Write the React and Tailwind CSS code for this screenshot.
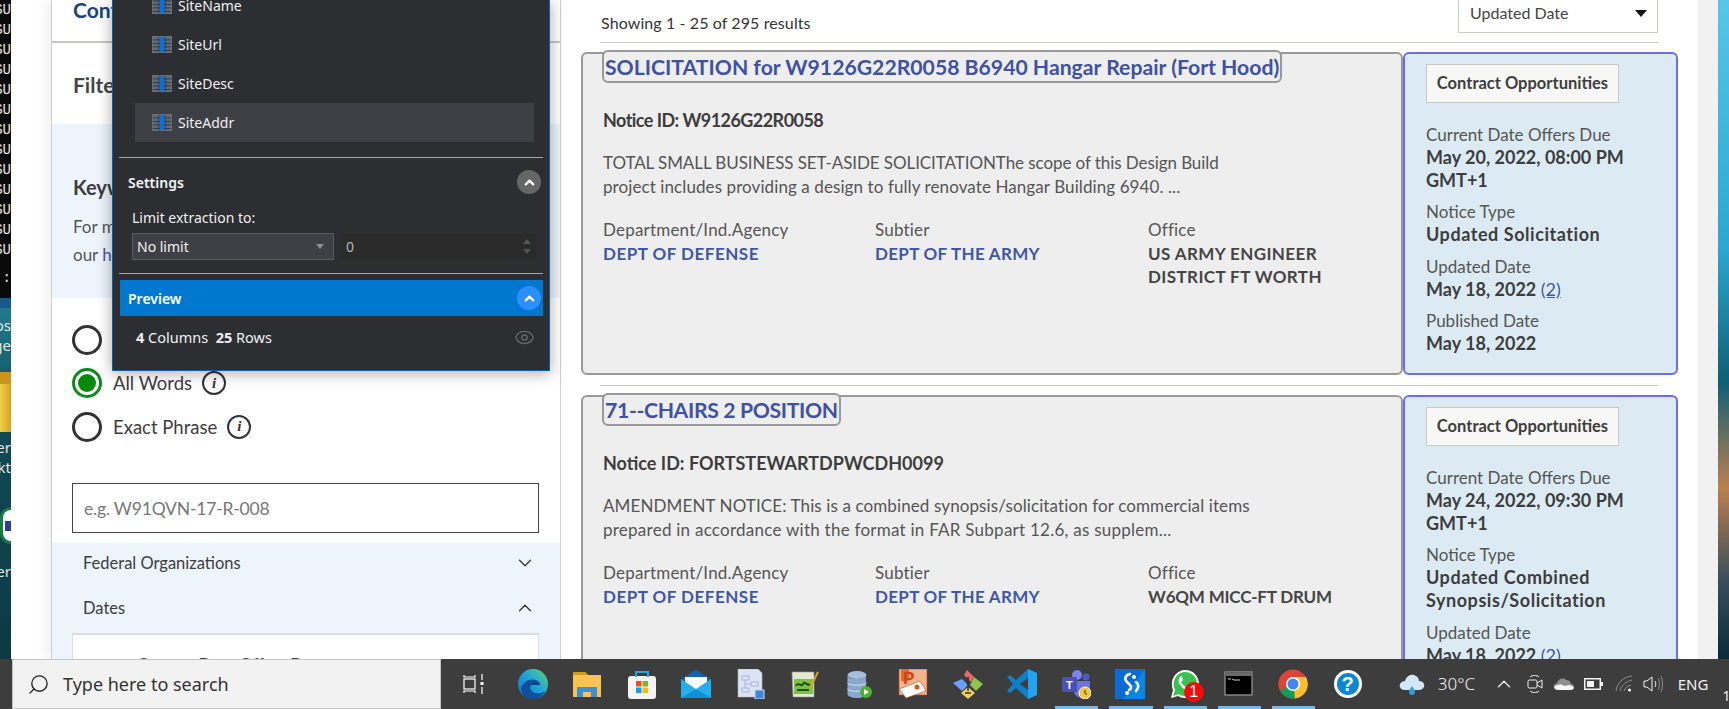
import React from "react";
import { ChevronDown, ChevronUp, Eye, Search } from "lucide-react";

const TableIcon = () => (
  <svg width="20" height="17" viewBox="0 0 20 17">
    <rect x="0" y="0" width="20" height="17" fill="#5f6a75" />
    {[3.5, 7, 10.5, 14].map((y) => (
      <rect key={y} x="0" y={y} width="20" height="0.8" fill="#2d2e32" />
    ))}
    <rect x="6.5" y="0" width="0.8" height="17" fill="#2d2e32" />
    <rect x="12.7" y="0" width="0.8" height="17" fill="#2d2e32" />
    <rect x="0.8" y="0.8" width="18.4" height="15.4" fill="none" stroke="#6d7780" strokeWidth="0.8" />
    <rect x="7.6" y="1" width="4.8" height="15" fill="#0a6fd6" />
  </svg>
);

const FieldRow = ({ name, active }) => (
  <div className={`h-[39px] ml-[22px] mr-[15px] pl-[17px] flex items-center gap-[6px] ${active ? "bg-[#3e3f44]" : ""}`}>
    <TableIcon />
    <span className="text-[14px] text-[#f0f0f0]">{name}</span>
  </div>
);

const RoundToggle = ({ color }) => (
  <span className={`w-[24px] h-[24px] rounded-full flex items-center justify-center ${color}`}>
    <ChevronUp size={15} strokeWidth={3.5} color="#fff" />
  </span>
);

const ExtractPopup = () => (
  <div className="absolute z-20 left-[112px] top-0 w-[438px] h-[371px] bg-[#2d2e32] border border-t-0 border-[#0f5ea8] overflow-hidden shadow-[0_2px_14px_rgba(0,0,0,0.35)] font-['Noto_Sans',sans-serif]">
    <div className="-mt-[14px]">
      <FieldRow name="SiteName" />
      <FieldRow name="SiteUrl" />
      <FieldRow name="SiteDesc" />
      <FieldRow name="SiteAddr" active />
    </div>
    <div className="mt-[15px] mx-[6px] h-px bg-[#a8a8a8]" />
    <div className="h-[48px] pl-[15px] pr-[8px] flex items-center justify-between">
      <span className="text-[14px] font-semibold text-[#f4f4f4]">Settings</span>
      <RoundToggle color="bg-[#666666]" />
    </div>
    <div className="h-[22px] ml-[19px] flex items-center text-[14px] text-[#f0f0f0]">Limit extraction to:</div>
    <div className="mt-[5px] ml-[19px] flex gap-[6px]">
      <div className="w-[202px] h-[27px] bg-[#3f4045] border border-[#5a5b60] flex items-center justify-between pl-[4px] pr-[9px]">
        <span className="text-[14px] text-[#f0f0f0]">No limit</span>
        <span className="w-0 h-0 border-x-[4px] border-x-transparent border-t-[5px] border-t-[#8e8e8e]" />
      </div>
      <div className="w-[196px] h-[27px] bg-[#2b2b2c] flex items-center justify-between pl-[6px] pr-[4px]">
        <span className="text-[14px] text-[#b8b8b8]">0</span>
        <span className="flex flex-col gap-[5px] mr-[1px]">
          <span className="w-0 h-0 border-x-[4px] border-x-transparent border-b-[5px] border-b-[#55565a]" />
          <span className="w-0 h-0 border-x-[4px] border-x-transparent border-t-[5px] border-t-[#55565a]" />
        </span>
      </div>
    </div>
    <div className="mt-[13px] mx-[6px] h-px bg-[#a8a8a8]" />
    <div className="mt-[6px] ml-[7px] mr-[6px] h-[36px] bg-[#0078cf] pl-[8px] pr-[2px] flex items-center justify-between">
      <span className="text-[14px] font-semibold text-white">Preview</span>
      <RoundToggle color="bg-[#2b8fff]" />
    </div>
    <div className="h-[43px] pl-[23px] pr-[14px] flex items-center justify-between text-[14.5px] text-[#f0f0f0]">
      <span>
        <b>4</b> Columns &nbsp;<b>25</b> Rows
      </span>
      <Eye size={21} strokeWidth={1.4} color="#6a6b70" />
    </div>
  </div>
);

const InfoDot = () => (
  <span className="w-[24px] h-[24px] rounded-full border-2 border-[#333333] flex items-center justify-center font-['Liberation_Serif',serif] italic font-bold text-[15px] leading-none text-[#333333]">
    i
  </span>
);

const Radio = ({ label, checked }) => (
  <div className="h-[43.5px] flex items-center">
    {checked ? (
      <span className="w-[30px] h-[30px] rounded-full border-[3px] border-[#0b8a1a] p-[3px] bg-white">
        <span className="block w-full h-full rounded-full bg-[#078a0c]" />
      </span>
    ) : (
      <span className="w-[30px] h-[30px] rounded-full border-[3px] border-[#333333] bg-white" />
    )}
    <span className="ml-[11px] pt-[2px] text-[18.5px] text-[#3d3d3d]">{label}</span>
    <span className="ml-[10px]">
      <InfoDot />
    </span>
  </div>
);

const FilterPanel = () => (
  <div className="w-[510px] h-full shrink-0 border-x border-[#cfcfca] bg-white shadow-[-6px_0_10px_rgba(0,0,0,0.05)]">
    <div className="h-[43px] border-b-2 border-[#c8c8c2] pl-[21px] pt-0 text-[21px] leading-[20px] font-bold text-[#1a4480]">
      Contract Opportunities
    </div>
    <div className="h-[81px] pl-[21px] pt-[28px] text-[21px] leading-[28px] font-bold text-[#454545]">Filters</div>
    <div className="h-[174px] bg-[#edf4fb] pl-[21px] pr-[20px] pt-[50px]">
      <div className="text-[20px] leading-[26px] font-bold text-[#3d3d3d]">Keyword Search</div>
      <p className="mt-[13px] text-[17px] leading-[28px] text-[#555555]">
        For more information on how to use
        <br />
        our <span className="text-[#3f57a6]">help guide</span>
      </p>
    </div>
    <div className="pl-[20px] pr-[21px] pt-[20px]">
      <Radio label="Any Words" />
      <Radio label="All Words" checked />
      <Radio label="Exact Phrase" />
      <div className="mt-[34.5px] h-[50px] border border-[#444444] flex items-center pl-[11px] pt-[2px] text-[17.5px] tracking-[-0.2px] text-[#777777]">
        e.g. W91QVN-17-R-008
      </div>
    </div>
    <div className="mt-[10px] h-[120px] bg-[#edf4fb] overflow-hidden">
      <div className="h-[40px] pl-[31px] pr-[24px] flex items-center justify-between text-[16.5px] text-[#3d3d3d]">
        Federal Organizations
        <ChevronDown size={22} strokeWidth={1.4} color="#333333" />
      </div>
      <div className="h-[50px] pl-[31px] pr-[24px] flex items-center justify-between text-[16.5px] text-[#3d3d3d]">
        Dates
        <ChevronUp size={22} strokeWidth={1.4} color="#333333" />
      </div>
      <div className="ml-[20px] mr-[21px] h-[40px] bg-white border-t-2 border-x border-[#d9dde2] pl-[64px] pt-[17px] text-[17px] text-[#3d3d3d]">
        Current Date Offers Due
      </div>
    </div>
  </div>
);

const Field = ({ label, children }) => (
  <>
    <div className="text-[#555555] font-normal tracking-[0.2px]">{label}</div>
    {children}
  </>
);

const OppCard = ({ title, titleTrack, notice, noticeTrack, desc, office, officeTrack, due, type, updated, published }) => (
  <div className="flex h-[323px] shrink-0 text-[17px] leading-[23.5px]">
    <div className="flex-1 bg-[#eeeeee] border-2 border-[#999999] rounded-[6px] pl-[20px] pr-[16px]">
      <div className={`-mt-[4px] -ml-[1px] h-[33px] w-fit border-2 border-[#999999] rounded-[6px] bg-[#eeeeee] px-[1px] text-[21.2px] leading-[30px] font-bold text-[#3f51a5] whitespace-nowrap ${titleTrack}`}>
        {title}
      </div>
      <div className={`mt-[25px] text-[18px] leading-[24px] font-bold text-[#3d3d3d] ${noticeTrack}`}>Notice ID: {notice}</div>
      <div className="mt-[19px] text-[17px] leading-[24px] text-[#555555] whitespace-nowrap">
        {desc.map(([line, track]) => (
          <div key={line} className={track}>
            {line}
          </div>
        ))}
      </div>
      <div className="mt-[19px] grid grid-cols-[272px_273px_1fr]">
        <div>
          <Field label="Department/Ind.Agency">
            <div className="font-bold text-[#3f57a6] tracking-[0.5px]">DEPT OF DEFENSE</div>
          </Field>
        </div>
        <div>
          <Field label="Subtier">
            <div className="font-bold text-[#3f57a6] tracking-[0.3px]">DEPT OF THE ARMY</div>
          </Field>
        </div>
        <div>
          <Field label="Office">
            <div className={`font-bold text-[#454545] whitespace-pre-line ${officeTrack}`}>{office}</div>
          </Field>
        </div>
      </div>
    </div>
    <div className="w-[275px] shrink-0 bg-[#dcebf3] border-2 border-[#6a6cf5] rounded-[6px] pl-[21px] pt-[10px] leading-[23px]">
      <div className="w-[193px] h-[39px] bg-[#f7f7f5] border border-[#c9c9c4] flex items-center justify-center text-[16.5px] font-bold text-[#3d3d3d]">
        Contract Opportunities
      </div>
      <div className="mt-[19.5px] text-[18px] text-[#3d3d3d] font-bold">
        <div>
          <div className="text-[17px] text-[#555555] font-normal">Current Date Offers Due</div>
          {due}
          <br />
          GMT+1
        </div>
        <div className="mt-[8.5px]">
          <div className="text-[17px] text-[#555555] font-normal">Notice Type</div>
          <div className="whitespace-pre-line tracking-[0.55px]">{type}</div>
        </div>
        <div className="mt-[8.5px]">
          <div className="text-[17px] text-[#555555] font-normal">Updated Date</div>
          {updated} <span className="font-normal text-[#3f57a6] underline">(2)</span>
        </div>
        <div className="mt-[8.5px]">
          <div className="text-[17px] text-[#555555] font-normal">Published Date</div>
          {published}
        </div>
      </div>
    </div>
  </div>
);

const Results = () => (
  <div className="ml-[20px] w-[1097px] shrink-0 h-full overflow-hidden flex flex-col">
    <div className="ml-[19px] mr-[20px] h-[43px] shrink-0 border-b border-[#cbcbc2] flex justify-between">
      <span className="ml-px pt-[11px] text-[16px] leading-[24px] tracking-[0.1px] text-[#333333]">Showing 1 - 25 of 295 results</span>
      <div className="w-[200px] h-[33px] border-x border-b border-[#cbcbc2] flex items-center justify-between pl-[11px] pr-[10px] pb-[6px] text-[16px] text-[#444444]">
        Updated Date
        <span className="w-0 h-0 border-x-[6px] border-x-transparent border-t-[7px] border-t-[#111111]" />
      </div>
    </div>
    <div className="mt-[9px]">
      <OppCard
        title="SOLICITATION for W9126G22R0058 B6940 Hangar Repair (Fort Hood)"
        titleTrack=""
        notice="W9126G22R0058"
        noticeTrack="tracking-[-0.55px]"
        desc={[
          ["TOTAL SMALL BUSINESS SET-ASIDE SOLICITATIONThe scope of this Design Build", "tracking-[-0.08px]"],
          ["project includes providing a design to fully renovate Hangar Building 6940. ...", "tracking-[0.09px]"],
        ]}
        office={"US ARMY ENGINEER\nDISTRICT FT WORTH"}
        officeTrack="tracking-[0.4px]"
        due="May 20, 2022, 08:00 PM"
        type="Updated Solicitation"
        updated="May 18, 2022"
        published="May 18, 2022"
      />
    </div>
    <div className="mt-[10px] ml-[19px] mr-[20px] h-px shrink-0 bg-[#cbcbc2]" />
    <div className="mt-[9px]">
      <OppCard
        title="71--CHAIRS 2 POSITION"
        titleTrack="tracking-[-0.35px]"
        notice="FORTSTEWARTDPWCDH0099"
        noticeTrack=""
        desc={[
          ["AMENDMENT NOTICE: This is a combined synopsis/solicitation for commercial items", "tracking-[0.11px]"],
          ["prepared in accordance with the format in FAR Subpart 12.6, as supplem...", "tracking-[0.25px]"],
        ]}
        office="W6QM MICC-FT DRUM"
        officeTrack="tracking-[-0.2px]"
        due="May 24, 2022, 09:30 PM"
        type={"Updated Combined\nSynopsis/Solicitation"}
        updated="May 18, 2022"
        published="May 18, 2022"
      />
    </div>
  </div>
);

const LeftDesktop = () => (
  <div className="w-[11px] h-full shrink-0 flex flex-col overflow-hidden bg-[#0c3a44] text-[#e5e5e5]">
    <div className="h-[298px] shrink-0 bg-[#0a0a0a] font-['Liberation_Mono',monospace] text-[14px]">
      {Array.from({ length: 13 }).map((_, i) => (
        <div key={i} className="h-[20px] flex justify-end leading-[20px]">
          SU
        </div>
      ))}
      <div className="h-[28px] flex justify-end items-end leading-[20px]">::</div>
    </div>
    <div className="h-[10px] shrink-0 bg-[#14598f]" />
    <div className="flex-1 flex flex-col items-end bg-[linear-gradient(180deg,#1f7a8c_0%,#0f4a55_35%,#0b3a44_100%)] text-[15px] font-['Noto_Sans',sans-serif]">
      <div className="h-[20px] leading-[20px] mt-[7px]">os</div>
      <div className="h-[20px] leading-[20px]">ge</div>
      <div className="mt-[17px] h-[60px] w-[11px] shrink-0 bg-[linear-gradient(90deg,#f0cf4a,#d9a520)] border-t-[12px] border-[#c9951c]" />
      <div className="h-[20px] leading-[20px] mt-[5px]">er</div>
      <div className="h-[20px] leading-[20px]">kt</div>
      <div className="mt-[30px] h-[37px] w-[11px] shrink-0 rounded-l-full border-[3px] border-r-0 border-[#187a45] bg-white flex items-center">
        <span className="block ml-[2px] w-[6px] h-[10px] bg-[#2d3e8c]" />
      </div>
      <div className="h-[20px] leading-[20px] mt-[17px]">er</div>
    </div>
  </div>
);

/* taskbar icons, drawn on a 30x30 box */
const Ico = ({ children }) => (
  <svg width="30" height="30" viewBox="0 0 30 30">
    {children}
  </svg>
);

const TaskIcons = [
  <Ico key="edge">
    <defs>
      <linearGradient id="edgeA" x1="0" y1="1" x2="1" y2="0">
        <stop offset="0" stopColor="#0c6fc4" />
        <stop offset="0.55" stopColor="#1fa7d8" />
        <stop offset="1" stopColor="#5fd66a" />
      </linearGradient>
    </defs>
    <circle cx="15" cy="15" r="15" fill="url(#edgeA)" />
    <path d="M3 20C5 12 12 9 18 11c3 1 4 3 4 5h-9c-2 3 0 7 4 8 4 1 7 0 10-2-3 6-8 8-13 8-6 0-10-4-11-10z" fill="#0f4f9c" />
    <path d="M13 16c2-3 7-3 9 0z" fill="#0c3f7f" />
  </Ico>,
  <Ico key="folder">
    <path d="M1 3h12l3 3h13v22H1z" fill="#f5c451" />
    <path d="M1 3h12l3 3H1z" fill="#d49a1f" />
    <path d="M5 28V18h20v10h-6v-5h-8v5z" fill="#3f8fd6" />
  </Ico>,
  <Ico key="store">
    <rect x="1" y="7" width="28" height="23" rx="3" fill="#f4f4f4" />
    <path d="M9 8V3h12v5" fill="none" stroke="#2aa5e0" strokeWidth="2" />
    <rect x="9" y="12" width="5.5" height="5.5" fill="#e8501f" />
    <rect x="15.5" y="12" width="5.5" height="5.5" fill="#7cb82a" />
    <rect x="9" y="18.5" width="5.5" height="5.5" fill="#10a2ec" />
    <rect x="15.5" y="18.5" width="5.5" height="5.5" fill="#fbb911" />
  </Ico>,
  <Ico key="mail">
    <path d="M0 10 15 1l15 9-15 10z" fill="#0f63b8" />
    <path d="M4 8h22v10l-11 6-11-6z" fill="#fff" />
    <path d="M0 10l15 10 15-10v19H0z" fill="#25aeea" />
    <path d="M0 29l15-9 15 9z" fill="#1190d8" />
  </Ico>,
  <Ico key="doc">
    <path d="M3 0h20l4 4v24H3z" fill="#dde3f3" stroke="#aeb6c8" strokeWidth="0.6" />
    <path d="M7 7h7v4H7zM16 13h7v4h-7zM7 19h7v4H7zM10 11v8M10 15h6" fill="none" stroke="#a7b4dc" strokeWidth="1" />
    <rect x="20" y="21" width="9" height="9" fill="#3c87d8" stroke="#c9d9f0" />
  </Ico>,
  <Ico key="npp">
    <path d="M2 3h22v25H3z" fill="#e6e6d6" stroke="#999988" strokeWidth="0.6" />
    <rect x="4" y="10" width="19" height="15" fill="#7fc241" />
    <path d="M6 17c2-5 5 2 7-2s4 3 7 0M7 21h12" stroke="#1f4d1a" strokeWidth="2" fill="none" />
    <path d="M20 19 28 3" stroke="#e0a11f" strokeWidth="2" />
  </Ico>,
  <Ico key="db">
    <ellipse cx="13" cy="6" rx="9.5" ry="4" fill="#a5bedb" />
    <path d="M3.5 6v19c0 2 4 4 9.500 4S22 27 22 25V6c0 2-4 4-9.500 4S3.500 8 3.500 6z" fill="#8aa8cc" />
    <path d="M3.500 14c2 3 17 3 19 0M3.500 20c2 3 17 3 19 0" stroke="#d2e0ef" fill="none" />
    <circle cx="22" cy="23" r="6" fill="#4fb02d" />
    <path d="M20 20v6l5-3z" fill="#fff" />
  </Ico>,
  <Ico key="ppt">
    <rect x="1" y="0" width="28" height="26" fill="#f2b48a" stroke="#b9451c" strokeWidth="0.6" />
    <path d="M3 0h8v12H3z" fill="#e66a25" />
    <text x="5" y="15" fontSize="17" fontWeight="700" fill="#d0421c" fontFamily="Liberation Sans, sans-serif">P</text>
    <path d="M1 20 22 12l6 10-20 7z" fill="#fff" stroke="#c9401f" strokeWidth="0.6" />
    <circle cx="19" cy="18" r="2.500" fill="#d9541f" />
  </Ico>,
  <Ico key="diamond">
    <path d="M9 10 15 16 9 22 0 14z" fill="#6a9eff" />
    <path d="M14 1 21 8 18 13 11 6z" fill="#e86a6a" />
    <path d="M21 8 30 15 23 22 17 16z" fill="#8dc44e" />
    <path d="M15 18 22 24 15 30 8 24z" fill="#f2cf5b" />
    <path d="M15 8v14M12 24h6" stroke="#333" strokeWidth="1.600" />
  </Ico>,
  <Ico key="vscode">
    <path d="M21 0 30 4v22l-9 4-12-11-6 5-3-2 6-7-6-7 3-2 6 5z" fill="#0f7fc7" />
    <path d="M21 0 30 4v22l-9 4V20l-7-5 7-5z" fill="#22a3ec" />
    <path d="M21 9l-8 6 8 6z" fill="#3d3d3d" />
  </Ico>,
  <Ico key="teams">
    <circle cx="16" cy="6" r="5" fill="#7b83eb" />
    <circle cx="25" cy="8" r="3.500" fill="#5059c9" />
    <path d="M13 12h16v10c0 5-4 7-7 7-4 0-9-2-9-7z" fill="#6c74d8" />
    <rect x="1" y="8" width="15" height="15" rx="1.500" fill="#4a51b5" />
    <text x="5" y="20" fontSize="11" fontWeight="700" fill="#fff" fontFamily="Liberation Sans, sans-serif">T</text>
    <circle cx="24" cy="24" r="6" fill="#f2c53c" stroke="#fff" />
    <path d="M24 21v3.500l2 1" fill="none" stroke="#333" />
  </Ico>,
  <Ico key="sq">
    <rect width="30" height="30" fill="#0a6ad6" />
    <path d="M30 0v30H8z" fill="#0a84e6" />
    <path d="M15 5c-5 1-6 5-3 8l3 3c2 2 1 4-1 5" fill="none" stroke="#fff" strokeWidth="2.600" strokeLinecap="round" />
    <circle cx="19" cy="8" r="2" fill="#fff" />
    <circle cx="12" cy="24" r="2" fill="#fff" />
    <path d="M21 13c3 2 3 6 0 9" fill="none" stroke="#fff" strokeWidth="2.600" strokeLinecap="round" />
  </Ico>,
  <div key="wa" className="relative w-[30px] h-[30px]">
    <Ico>
      <path d="M1 29l2-8C-1 11 6 1 15 1c8 0 14 6 14 14s-6 14-14 14c-3 0-5-1-7-2z" fill="#fff" />
      <path d="M3 27l2-6C1 12 7 3 15 3c7 0 12 5 12 12s-5 12-12 12c-3 0-5-1-6-2z" fill="#3ac14f" />
      <path d="M10 8c-2 2-2 5 1 9s7 5 9 4l2-3-4-2-2 2c-2-1-4-3-5-5l2-2-1-4z" fill="#fff" />
    </Ico>
    <span className="absolute -right-[4px] bottom-[-3px] w-[20px] h-[20px] rounded-full bg-[#f40c0c] text-white text-[16px] leading-[20px] text-center font-['Liberation_Sans',sans-serif]">
      1
    </span>
  </div>,
  <Ico key="term">
    <rect x="1" y="3" width="27" height="23" fill="#000" stroke="#8a8a8a" strokeWidth="1.400" />
    <rect x="2" y="4" width="25" height="3" fill="#6b6b6b" />
    <path d="M4 10h3M8 10l2 1h6" stroke="#cfcfcf" strokeWidth="1" fill="none" />
  </Ico>,
  <Ico key="chrome">
    <circle cx="15" cy="15" r="14.500" fill="#db4437" />
    <path d="M15 15 2.500 22A14.500 14.500 0 0 1 2.500 8z" fill="#db4437" />
    <path d="M15 15 17 29.500A14.500 14.500 0 0 1 2 21.500z" fill="#0f9d58" />
    <path d="M15 8h13a14.500 14.500 0 0 1-11 21.500z" fill="#fbc02d" />
    <circle cx="15" cy="15" r="7" fill="#fff" />
    <circle cx="15" cy="15" r="5.500" fill="#4285f4" />
  </Ico>,
  <div key="help" className="w-[28px] h-[28px] rounded-full border-[3px] border-white bg-[#0a86d6] flex items-center justify-center text-white font-bold text-[20px] font-['Liberation_Sans',sans-serif]">
    ?
  </div>,
];

const underlined = [10, 11, 12, 13, 14];

const Taskbar = () => (
  <div className="h-[50px] shrink-0 bg-[#3d3d3d] flex items-stretch font-['Noto_Sans',sans-serif] overflow-hidden">
    <div className="ml-[12px] w-[429px] shrink-0 bg-[#f2f2f2] border border-[#c4c4c4] flex items-center">
      <Search size={23} strokeWidth={1.4} color="#222222" className="ml-[14px] -scale-x-100" />
      <span className="ml-[13px] text-[18px] text-[#333333]">Type here to search</span>
    </div>
    <div className="w-[65px] shrink-0 flex items-center justify-center">
      <svg width="22" height="20" viewBox="0 0 22 20" fill="none" stroke="#fff" strokeWidth="1.200">
        <path d="M1 1v2h11V1M1 19v-2h11v2" />
        <rect x="1" y="5" width="11" height="10" />
        <path d="M19 0v6M19 13v7" />
        <rect x="17.500" y="8" width="3" height="3" fill="#fff" stroke="none" />
      </svg>
    </div>
    {TaskIcons.map((icon, i) => (
      <div key={i} className="relative w-[54.3px] shrink-0 flex items-center justify-center">
        {icon}
        {underlined.includes(i) && (
          <span className="absolute bottom-0 left-[6px] right-[5px] h-[3px] bg-[#76b9ed]" />
        )}
      </div>
    ))}
    <div className="ml-[19px] w-[36px] shrink-0 flex items-center justify-center">
      <svg width="26" height="24" viewBox="0 0 26 24">
        <path d="M6 18C2 18 0 15 1 12c1-2 3-3 5-3 1-4 5-7 9-6 3 1 5 3 5 6 4 0 6 3 5 6-1 2-3 3-5 3z" fill="#d3e8f7" />
        <path d="M13 14c2 3 3 4 3 6s-1 3-3 3-3-1-3-3 1-3 3-6z" fill="#3c9be0" />
      </svg>
    </div>
    <span className="ml-[8px] w-[48px] shrink-0 self-center text-[17px] text-[#f2f2f2] font-light whitespace-nowrap">30°C</span>
    <div className="w-[36px] shrink-0 flex items-center justify-center">
      <ChevronUp size={22} strokeWidth={1.3} color="#f2f2f2" />
    </div>
    <div className="w-[26px] shrink-0 flex items-center justify-center">
      <svg width="16" height="20" viewBox="0 0 16 20" fill="none" stroke="#f2f2f2" strokeWidth="1">
        <rect x="1" y="6" width="9" height="8" rx="1.500" />
        <path d="M10 9l5-3v8l-5-3M3 3c2-2 7-2 9 0M3 17c2 2 7 2 9 0" />
      </svg>
    </div>
    <div className="w-[32px] shrink-0 flex items-center justify-center">
      <svg width="21" height="14" viewBox="0 0 21 14">
        <path d="M5 13C1 13 0 10 1 8c1-1 2-2 3-2 1-4 6-6 9-3 3 0 5 2 5 4 2 0 3 2 3 3s-1 3-3 3z" fill="#8f8f8f" />
        <path d="M1 10c4-3 8-3 10-1l5-1c2 0 4 1 5 3-1 1-2 2-3 2H5c-2 0-3-1-4-3z" fill="#f7f7f7" />
      </svg>
    </div>
    <div className="w-[28px] shrink-0 flex items-center justify-center">
      <svg width="19" height="12" viewBox="0 0 19 12">
        <rect x="0.750" y="0.750" width="15.500" height="10.500" fill="none" stroke="#f2f2f2" strokeWidth="1.500" />
        <rect x="3" y="3" width="7" height="6" fill="#f2f2f2" />
        <rect x="17" y="4" width="2" height="4" fill="#f2f2f2" />
      </svg>
    </div>
    <div className="w-[32px] shrink-0 flex items-center justify-center">
      <svg width="18" height="18" viewBox="0 0 18 18" fill="none" stroke="#8d8d8d" strokeWidth="1">
        <path d="M1 16C2 8 8 2 17 1M5 16c1-5 5-9 12-11M9 16c1-3 3-5 7-6" />
        <circle cx="14.500" cy="15" r="1.600" fill="#f2f2f2" stroke="none" />
      </svg>
    </div>
    <div className="w-[26px] shrink-0 flex items-center justify-center">
      <svg width="20" height="18" viewBox="0 0 20 18" fill="none" strokeWidth="1">
        <path d="M1 6h3l5-4v14l-5-4H1z" stroke="#f2f2f2" />
        <path d="M12 6c1 2 1 4 0 6" stroke="#f2f2f2" />
        <path d="M15 3c2 4 2 8 0 12M18 1c2 5 2 11 0 16" stroke="#8d8d8d" />
      </svg>
    </div>
    <span className="ml-[12px] shrink-0 self-center text-[15px] text-[#f2f2f2]">ENG</span>
    <span className="ml-[14px] shrink-0 self-end mb-[3px] text-[14px] text-[#f2f2f2]">1</span>
  </div>
);

export default function App() {
  return (
    <div className="w-[1729px] h-screen overflow-hidden flex flex-col bg-white font-['Lato',sans-serif]">
      <div className="relative h-[659px] shrink-0 flex overflow-hidden">
        <LeftDesktop />
        <div className="ml-[40px] flex h-full">
          <FilterPanel />
          <Results />
        </div>
        <div className="ml-[20px] w-[20px] shrink-0 bg-[#f1f1f1]" />
        <div className="flex-1 bg-[linear-gradient(180deg,#57c6e8_0%,#2ca6cf_38%,#0f5f75_58%,#bb7f4f_74%,#3a4e5c_88%,#0c2a3a_100%)]" />
        <ExtractPopup />
      </div>
      <Taskbar />
    </div>
  );
}
